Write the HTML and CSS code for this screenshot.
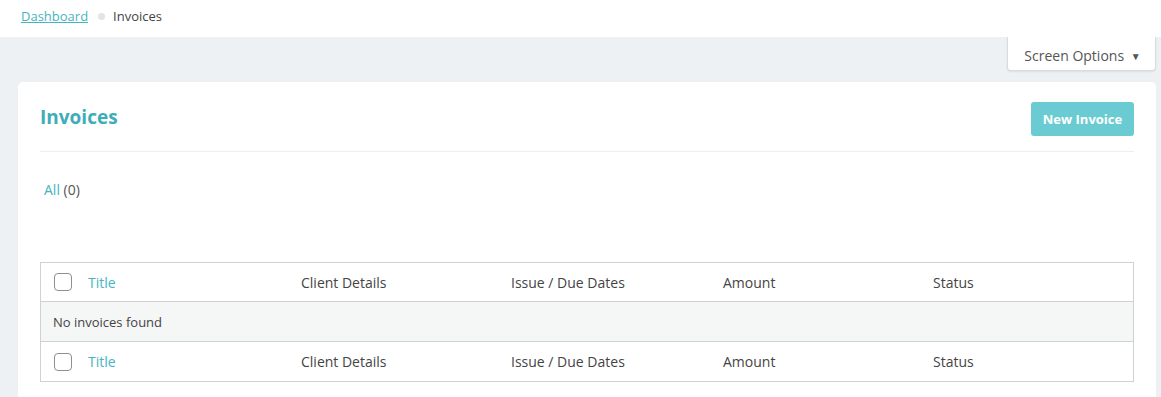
FILE: index.html
```html
<!DOCTYPE html>
<html>
<head>
<meta charset="utf-8">
<link rel="stylesheet" href="styles.css">
</head>
<body>
<div class="topbar">
  <nav class="crumbs">
    <a href="#" class="crumb-link">Dashboard</a>
    <span class="crumb-dot"></span>
    <span class="crumb-current">Invoices</span>
  </nav>
</div>
<div class="main">
  <div class="screen-row">
    <button class="screen-options">Screen Options <span class="caret">&#9660;</span></button>
  </div>
  <div class="card">
    <div class="card-head">
      <h1 class="card-title">Invoices</h1>
      <button class="btn-primary">New Invoice</button>
    </div>
    <div class="filters">
      <a href="#" class="filter-link">All</a> <span class="count">(0)</span>
    </div>
    <div class="table">
      <div class="row head">
        <div class="cell cb"><span class="checkbox"></span></div>
        <div class="cell title"><a href="#">Title</a></div>
        <div class="cell client">Client Details</div>
        <div class="cell dates">Issue / Due Dates</div>
        <div class="cell amount">Amount</div>
        <div class="cell status">Status</div>
      </div>
      <div class="row empty">
        <div class="cell">No invoices found</div>
      </div>
      <div class="row head foot">
        <div class="cell cb"><span class="checkbox"></span></div>
        <div class="cell title"><a href="#">Title</a></div>
        <div class="cell client">Client Details</div>
        <div class="cell dates">Issue / Due Dates</div>
        <div class="cell amount">Amount</div>
        <div class="cell status">Status</div>
      </div>
    </div>
  </div>
</div>
</body>
</html>
```
FILE: styles.css
```css
* { box-sizing: border-box; }
html, body { margin: 0; padding: 0; }
body {
  background: #eef1f4;
  font-family: "Open Sans", "Noto Sans", sans-serif;
  font-size: 14px;
  color: #444;
  overflow: hidden;
}
.topbar {
  height: 37px;
  background: #fff;
  display: flex;
  align-items: center;
  padding-left: 21px;
  padding-bottom: 5px;
}
.crumbs { display: flex; align-items: center; font-size: 13px; }
.crumb-link { color: #45b5c0; text-decoration: underline; }
.crumb-dot {
  width: 7px; height: 7px; border-radius: 50%;
  background: #e2e4e6; margin: 0 8px 0 10px;
}
.crumb-current { color: #444; }
.main { padding: 0 5px 0 18px; }
.screen-row { display: flex; justify-content: flex-end; }
.screen-options {
  height: 34px;
  width: 149px;
  background: #fff;
  border: 1px solid #d9dcdf;
  border-top: none;
  border-radius: 0 0 4px 4px;
  font-family: inherit;
  font-size: 14px;
  color: #555;
  padding: 3px 0 0 2px;
  box-shadow: 0 1px 2px rgba(0,0,0,0.08);
}
.caret { font-size: 10px; margin-left: 3px; position: relative; top: -1px; }
.card {
  margin-top: 11px;
  background: #fff;
  border-radius: 5px;
  padding: 20px 22px 20px 22px;
  height: 330px;
}
.card-head {
  display: flex;
  justify-content: space-between;
  align-items: center;
  padding-bottom: 15px;
  border-bottom: 1px solid #eceeef;
}
.card-title {
  margin: -4px 0 0 0;
  font-size: 19px;
  font-weight: 700;
  color: #3eadb8;
}
.btn-primary {
  width: 103px;
  height: 34px;
  background: #6bcbd2;
  border: none;
  border-radius: 3px;
  color: #fff;
  font-family: inherit;
  font-weight: 700;
  font-size: 13px;
}
.filters {
  padding-top: 28px;
  padding-left: 4px;
  font-size: 14px;
  height: 110px;
}
.filter-link { color: #45b5c0; text-decoration: none; }
.count { color: #555; }
.table {
  border: 1px solid #cfd2d4;
}
.row {
  display: flex;
  align-items: center;
  height: 38px;
}
.row.foot { height: 39px; }
.row.empty {
  background: #f5f6f6;
  border-top: 1px solid #cfd2d4;
  border-bottom: 1px solid #cfd2d4;
  height: 41px;
  padding-left: 12px;
  font-size: 13px;
  color: #555;
}
.cell { color: #444; }
.cb { width: 47px; padding-left: 13px; display: flex; }
.checkbox {
  width: 18px; height: 18px;
  border: 1px solid #8c8f94;
  border-radius: 4px;
  background: #fff;
}
.title { width: 213px; }
.title a { color: #45b5c0; text-decoration: none; }
.client { width: 210px; }
.dates { width: 212px; }
.amount { width: 210px; }
.status { flex: 1; }
```
